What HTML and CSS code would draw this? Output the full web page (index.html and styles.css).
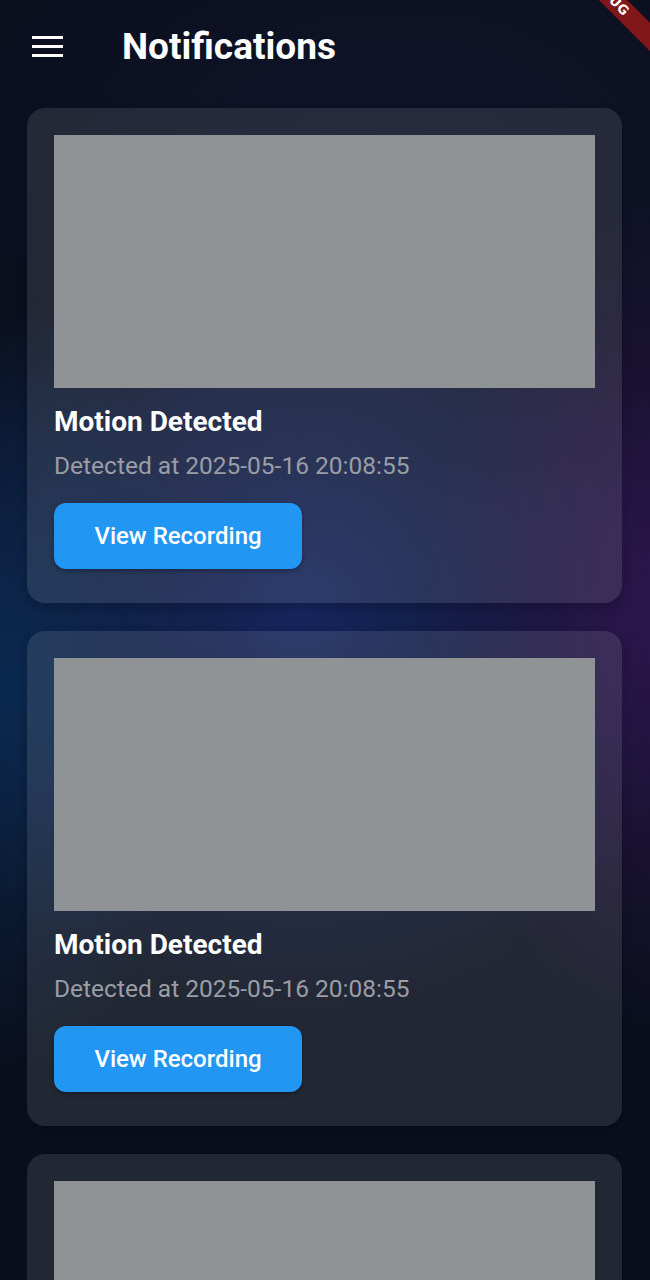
FILE: index.html
```html
<!DOCTYPE html>
<html lang="en">
<head>
<meta charset="utf-8">
<title>Notifications</title>
<link rel="stylesheet" href="styles.css">
</head>
<body>
<div class="screen">
  <header class="appbar">
    <button class="menu" aria-label="Menu">
      <svg width="32" height="24" viewBox="0 0 32 24"><rect x="0" y="1" width="31" height="3" fill="#fff"/><rect x="0" y="10" width="31" height="3" fill="#fff"/><rect x="0" y="19" width="31" height="3" fill="#fff"/></svg>
    </button>
    <h1 class="title">Notifications</h1>
  </header>
  <main class="list">
    <article class="card">
      <div class="thumb"></div>
      <h2 class="card-title">Motion Detected</h2>
      <p class="card-sub">Detected at 2025-05-16 20:08:55</p>
      <button class="btn">View Recording</button>
    </article>
    <article class="card">
      <div class="thumb"></div>
      <h2 class="card-title">Motion Detected</h2>
      <p class="card-sub">Detected at 2025-05-16 20:08:55</p>
      <button class="btn">View Recording</button>
    </article>
    <article class="card">
      <div class="thumb"></div>
      <h2 class="card-title">Motion Detected</h2>
      <p class="card-sub">Detected at 2025-05-16 20:08:55</p>
      <button class="btn">View Recording</button>
    </article>
  </main>
  <div class="debug"><span>DEBUG</span></div>
</div>
</body>
</html>
```
FILE: styles.css
```css
* { box-sizing: border-box; }
html, body { margin: 0; padding: 0; }
body {
  width: 650px;
  height: 1280px;
  overflow: hidden;
  font-family: Roboto, "Noto Sans", sans-serif;
  background: #0a0f1d;
}
.screen {
  position: relative;
  width: 650px;
  height: 1280px;
  overflow: hidden;
  background:
    radial-gradient(ellipse 210px 380px at 0px 690px, rgba(10,48,90,0.75), rgba(10,48,90,0) 100%),
    radial-gradient(ellipse 240px 420px at 660px 610px, rgba(50,22,82,0.85), rgba(50,22,82,0) 100%),
    radial-gradient(ellipse 420px 400px at 300px 610px, rgba(22,40,100,0.9), rgba(22,40,100,0) 100%),
    radial-gradient(ellipse 500px 300px at 400px 150px, rgba(20,22,50,0.6), rgba(20,22,50,0) 100%),
    #0a0f1d;
}
.appbar {
  display: flex;
  align-items: center;
  height: 94px;
  padding: 0 0 0 32px;
}
.menu {
  background: none;
  border: 0;
  padding: 0;
  width: 32px;
  height: 24px;
  display: flex;
  margin-right: 58px;
}
.title {
  margin: 0;
  color: #fff;
  font-size: 37px;
  font-weight: 700;
  line-height: 44px;
}
.list {
  display: flex;
  flex-direction: column;
  gap: 28px;
  padding: 14px 28px 0 27px;
}
.card {
  background: rgba(255,255,255,0.1);
  border-radius: 18px;
  padding: 27px 27px 34px;
  box-shadow: 0 4px 10px rgba(0,0,0,0.2);
}
.thumb {
  height: 253px;
  background: #8f9396;
}
.card-title {
  margin: 18px 0 0;
  color: #fff;
  font-size: 28px;
  font-weight: 700;
  line-height: 32px;
}
.card-sub {
  margin: 14px 0 0;
  color: #9a9da6;
  font-size: 24.5px;
  line-height: 28px;
}
.btn {
  display: block;
  margin-top: 23px;
  width: 248px;
  height: 66px;
  border: 0;
  border-radius: 12px;
  background: #2196f3;
  color: #fff;
  font-family: Roboto, sans-serif;
  font-size: 24px;
  font-weight: 500;
  box-shadow: 0 2px 4px rgba(0,0,0,0.3);
}
.debug {
  position: absolute;
  top: 0;
  right: 0;
  width: 120px;
  height: 80px;
  overflow: hidden;
  pointer-events: none;
}
.debug span {
  position: absolute;
  top: -15px;
  left: -2px;
  width: 160px;
  height: 20px;
  transform: rotate(45deg);
  background: #801719;
  color: #fff;
  font-family: "DejaVu Sans", sans-serif;
  font-weight: 700;
  font-size: 13px;
  line-height: 20px;
  text-align: center;
  letter-spacing: 0.5px;
}
```
